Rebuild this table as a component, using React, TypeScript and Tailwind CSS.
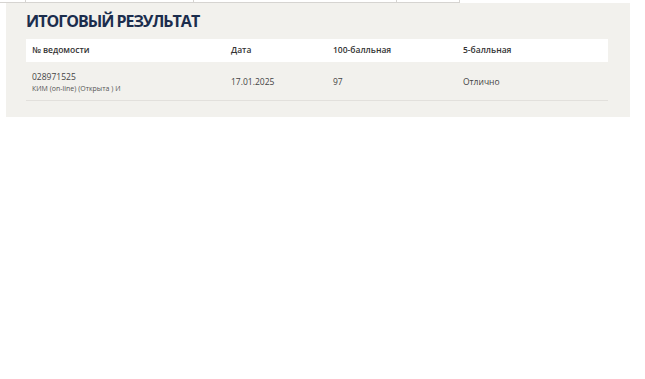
import React from "react";

export default function App() {
  const cols = ["w-[199px]", "w-[102px]", "w-[130px]", "flex-1"];
  const header = ["№ ведомости", "Дата", "100-балльная", "5-балльная"];
  return (
    <div className="min-h-[379px] w-[645px] bg-white" style={{ fontFamily: '"Open Sans", "Noto Sans", sans-serif' }}>
      <div className="flex h-[3px]">
        <div className="w-[25px] border-b border-[#d6d4d1]" />
        <div className="w-[168px] border-l border-b border-[#d6d4d1]" />
        <div className="w-[203px] border-l border-b border-[#d6d4d1]" />
        <div className="w-[64px] border-l border-r border-b border-[#d6d4d1]" />
      </div>
      <div className="ml-[6px] w-[624px] bg-[#f2f1ed] pl-[20px] pr-[22px] pt-[8px] pb-[16px]">
        <h1 className="text-[16px] font-bold leading-[20px] tracking-[-1px] text-[#1b2d4d]">ИТОГОВЫЙ РЕЗУЛЬТАТ</h1>
        <div className="mt-[8px]">
          <div className="flex h-[23px] items-center bg-white text-[8.5px] font-semibold text-[#333]">
            {header.map((h, i) => (
              <div key={i} className={`${cols[i]} px-[6px]`}>{h}</div>
            ))}
          </div>
          <div className="flex h-[39px] items-center border-b border-[#e2e0dc] text-[8.5px] text-[#444]">
            <div className={`${cols[0]} px-[6px] pt-[1px]`}>
              <div className="leading-[13px]">028971525</div>
              <div className="text-[7px] leading-[11px] text-[#555]">КИМ (on-line) (Открыта ) И</div>
            </div>
            <div className={`${cols[1]} px-[6px] pt-[2px]`}>17.01.2025</div>
            <div className={`${cols[2]} px-[6px] pt-[2px]`}>97</div>
            <div className={`${cols[3]} px-[6px] pt-[2px]`}>Отлично</div>
          </div>
        </div>
      </div>
    </div>
  );
}
